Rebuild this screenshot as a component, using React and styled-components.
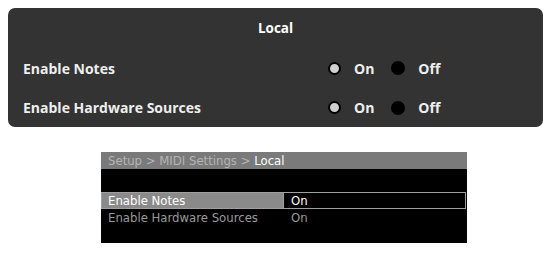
import styled, { createGlobalStyle } from 'styled-components';

const GlobalStyle = createGlobalStyle`
  body {
    margin: 0;
    background: #ffffff;
  }
`;

const rows = [
  { label: 'Enable Notes', value: 'On' },
  { label: 'Enable Hardware Sources', value: 'On' }
];

const Radio = ({ checked, children }) => (
  <MyOption>
    <MyDot $checked={checked} />
    <span>{children}</span>
  </MyOption>
);

export default function App() {
  return (
    <MyPage>
      <GlobalStyle />
      <MyPanel>
        <MyTitle>Local</MyTitle>
        {rows.map((row) => (
          <MyRow key={row.label}>
            <span>{row.label}</span>
            <MyOptions>
              <Radio checked>On</Radio>
              <Radio>Off</Radio>
            </MyOptions>
          </MyRow>
        ))}
      </MyPanel>

      <MyScreen>
        <MyCrumbs>
          Setup &gt; MIDI Settings &gt; <b>Local</b>
        </MyCrumbs>
        <MySpacer />
        {rows.map((row, i) => (
          <MyScreenRow key={row.label} $selected={i === 0}>
            <MyScreenLabel $selected={i === 0}>{row.label}</MyScreenLabel>
            <MyScreenValue $selected={i === 0}>{row.value}</MyScreenValue>
          </MyScreenRow>
        ))}
      </MyScreen>
    </MyPage>
  );
}

const MyPage = styled.div`
  width: 550px;
  height: 254px;
  padding-top: 8px;
  box-sizing: border-box;
`;

const MyPanel = styled.div`
  margin-left: 8px;
  width: 535px;
  height: 119px;
  background: #333333;
  border-radius: 7px;
  display: grid;
  grid-template-rows: 40px 40px 39px;
  font-family: 'Open Sans', 'Noto Sans', sans-serif;
  font-weight: 700;
  font-size: 14px;
  color: #eeeeee;
`;

const MyTitle = styled.div`
  display: flex;
  align-items: center;
  justify-content: center;
  font-size: 13.5px;
  color: #ffffff;
`;

const MyRow = styled.div`
  display: grid;
  grid-template-columns: 305px auto;
  align-items: center;
  padding-left: 15px;
`;

const MyOptions = styled.div`
  display: flex;
  align-items: center;
  gap: 17px;
`;

const MyOption = styled.div`
  display: flex;
  align-items: center;
  gap: 13px;
`;

const MyDot = styled.i`
  display: block;
  box-sizing: border-box;
  width: ${(p) => (p.$checked ? '13px' : '14px')};
  height: ${(p) => (p.$checked ? '13px' : '14px')};
  border-radius: 50%;
  background: ${(p) => (p.$checked ? '#cfcfcf' : '#000000')};
  border: ${(p) => (p.$checked ? '2.5px solid #000000' : 'none')};
`;

const MyScreen = styled.div`
  margin: 25px 0 0 101px;
  width: 366px;
  height: 91px;
  background: #000000;
  font-family: 'DejaVu Sans Condensed', 'DejaVu Sans', sans-serif;
  font-stretch: condensed;
  font-size: 13px;
  color: #9a9a9a;
`;

const MyCrumbs = styled.div`
  height: 17px;
  line-height: 17px;
  background: #7a7a7a;
  padding-left: 7px;
  color: #b4b4b4;

  & b {
    font-weight: 400;
    color: #ffffff;
  }
`;

const MySpacer = styled.div`
  height: 23px;
`;

const MyScreenRow = styled.div`
  display: grid;
  grid-template-columns: 181px 1fr;
  height: 17px;
  line-height: 15px;
  margin-right: 1px;
  box-sizing: border-box;
  border: 1px solid ${(p) => (p.$selected ? '#a0a0a0' : 'transparent')};
`;

const MyScreenLabel = styled.div`
  padding-left: 6px;
  background: ${(p) => (p.$selected ? '#8a8a8a' : 'transparent')};
  color: ${(p) => (p.$selected ? '#ffffff' : '#9a9a9a')};
`;

const MyScreenValue = styled.div`
  padding-left: 7px;
  border-left: 1px solid ${(p) => (p.$selected ? '#a0a0a0' : 'transparent')};
  color: ${(p) => (p.$selected ? '#ffffff' : '#9a9a9a')};
`;
